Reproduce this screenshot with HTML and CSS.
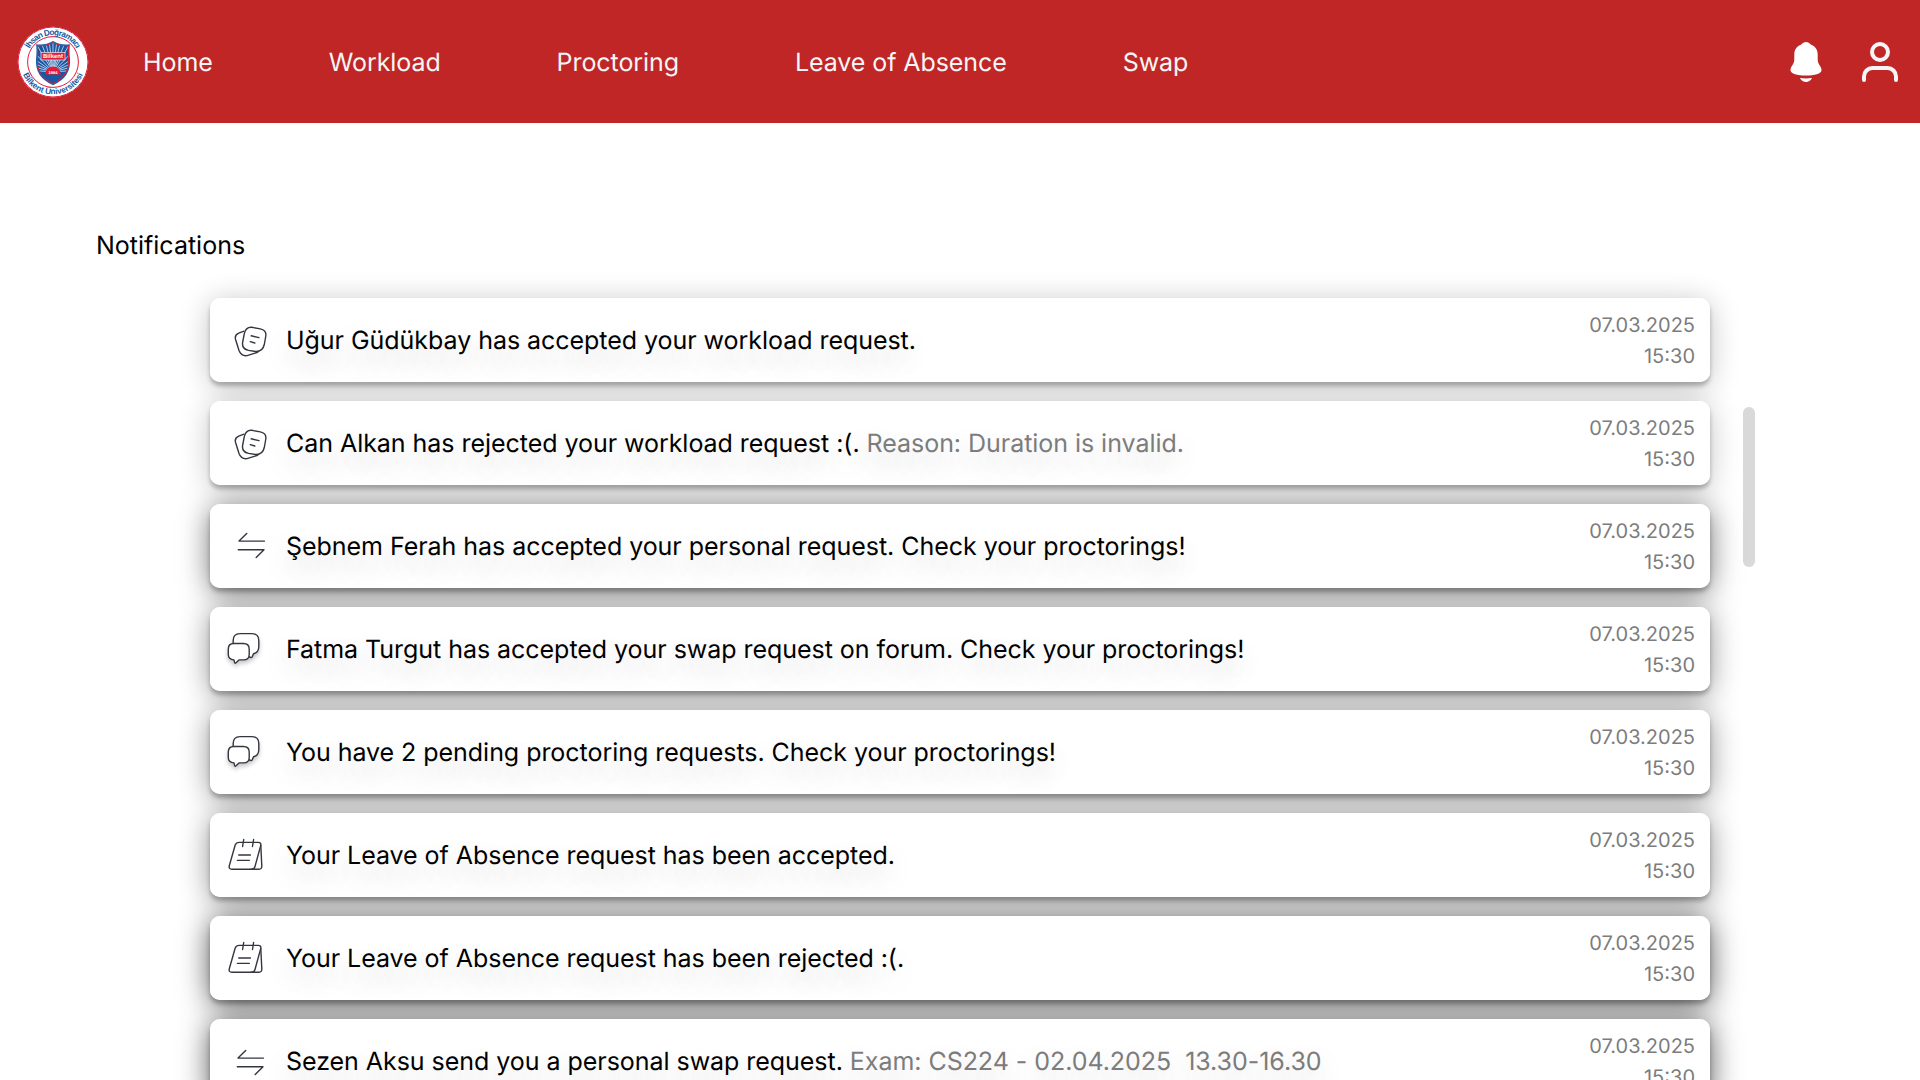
FILE: index.html
```html
<!DOCTYPE html>
<html lang="en">
<head>
<meta charset="utf-8">
<title>Notifications</title>
<link rel="stylesheet" href="styles.css">
</head>
<body>
<svg class="sprite" aria-hidden="true">
  <symbol id="notes" viewBox="0 0 76 84">
    <path d="M34 33.2 28.7 35.1Q24.4 37 25.5 41.2L29 52.5Q31.3 58.4 37 57.6L45 55.2Q47 54.6 48.2 53.6"/>
    <path d="M41.8 29.3 50.3 30.9Q56.6 32.2 55.8 38L54.3 46.5Q52.6 53.9 45.5 53.5L38.6 52.4Q31.7 50.9 32.6 44.5L34.3 35.6Q35.8 28.8 41.8 29.3Z"/>
    <path d="M41.2 37.8 49 39.6M40.2 43.7 44.8 45"/>
  </symbol>
  <symbol id="swap" viewBox="0 0 76 84">
    <path fill="none" d="M54.5 37.1H29L36.7 29.4M28.3 45.8H54L46.2 53.6"/>
  </symbol>
  <symbol id="chat" viewBox="0 0 76 84">
    <path d="M23.2 36.5V33.5Q23.2 26.6 30 26.6H42Q48.8 26.6 48.8 33.5V39.5Q48.8 45.6 43.5 46.8L42.3 49.6Q41.4 51.4 39 49.6"/>
    <path d="M23.8 36.5H33.5Q39.2 36.5 39.2 42V47.5Q39.2 52.9 33.5 52.9H29L26 55.8Q24.8 56.8 24.5 55.2L24 52.9Q18.3 52.5 18.3 47.5V42Q18.3 36.5 23.8 36.5Z"/>
  </symbol>
  <symbol id="pad" viewBox="0 0 76 84">
    <path d="M29.2 29.4H48.2Q51.5 29.4 50.7 32.6L45 53.5Q44.2 56.2 41.5 56.2H22Q18.5 56.2 19.3 52.8L25.2 32Q26.2 29.4 29.2 29.4Z"/>
    <path fill="none" d="M50.8 32.5 51.8 53Q51.9 56.2 49 56.2H41M33.7 26.5 32.6 33.5M43.6 26.5 42.5 33.5M28.7 42H40.4M27.4 47.4H39.3"/>
  </symbol>
</svg>

<header class="topbar">
  <svg class="logo" viewBox="0 0 72 72" role="img" aria-label="Bilkent">
    <defs>
      <path id="arc-top" d="M9 36A27 27 0 0 1 63 36"/>
      <path id="arc-bottom" d="M3.6 36A32.4 32.4 0 0 0 68.4 36"/>
      <clipPath id="shield"><path d="M36 16.5Q43 20.5 51.5 19.5Q51 24 51.8 33Q53 50 36 58Q19 50 20.2 33Q21 24 20.5 19.5Q29 20.5 36 16.5Z"/></clipPath>
    </defs>
    <circle class="white" cx="36" cy="36" r="35.3"/>
    <circle class="ring" cx="36" cy="36" r="35"/>
    <circle class="ring" cx="36" cy="36" r="25.4"/>
    <path class="edge" d="M36 15Q43.5 19.5 53 18.3Q52 24 53 33Q54.5 51 36 59.2Q17.5 51 19 33Q20 24 19 18.3Q28.5 19.5 36 15Z"/>
    <g clip-path="url(#shield)">
      <rect class="blue" x="17" y="14" width="38" height="46"/>
      <path class="rays" d="M36 46 10 44M36 46 10 39M36 46 10 34M36 46 10 28M36 46 13 22M36 46 18 16M36 46 23 14M36 46 28 14M36 46 32 14M36 46V14M36 46 40 14M36 46 44 14M36 46 49 14M36 46 54 16M36 46 59 22M36 46 62 28M36 46 62 34M36 46 62 39M36 46 62 44"/>
      <rect class="blue" x="18" y="48.5" width="36" height="12"/>
      <path class="red" d="M28 48.5A8 8 0 0 1 44 48.5Z"/>
    </g>
    <path class="ring" d="M36 16.8Q43 20.7 51.5 19.8Q51 24 51.6 33Q53 50 36 57.6Q19 50 20.4 33Q21 24 20.5 19.8Q29 20.7 36 16.8Z"/>
    <rect class="plate" x="24" y="26.5" width="24" height="7.5"/>
    <text class="plate-text" x="36" y="32.4">Bilkent</text>
    <text class="year" x="36" y="47.5">1984</text>
    <text class="seal"><textPath href="#arc-top" startOffset="50%" textLength="57">İhsan Doğramacı</textPath></text>
    <text class="seal"><textPath href="#arc-bottom" startOffset="50%" textLength="76">Bilkent Üniversitesi</textPath></text>
  </svg>
  <nav class="nav">
    <a>Home</a><a>Workload</a><a>Proctoring</a><a>Leave of Absence</a><a>Swap</a>
  </nav>
  <div class="actions">
    <svg class="bell" viewBox="0 0 32 42"><path d="M16 1C18.2 1 19.3 2.2 20.8 3.5C25 5 27.7 8.5 27.7 13.5V18.5C27.7 23.5 31.5 25 31.5 29C31.5 33 24.5 34.5 16 34.5S.5 33 .5 29C.5 25 4.3 23.5 4.3 18.5V13.5C4.3 8.5 7 5 11.2 3.5C12.7 2.2 13.8 1 16 1ZM9.8 37Q16 37.8 22.2 37C20.5 39.8 18.6 41 16 41S11.5 39.8 9.8 37Z"/></svg>
    <svg class="user" viewBox="0 0 40 42"><circle cx="20" cy="11" r="8"/><path d="M4 39V35.5A8.5 8.5 0 0 1 12.5 27H27.5A8.5 8.5 0 0 1 36 35.5V39"/></svg>
  </div>
</header>

<main class="page">
  <h1 class="title">Notifications</h1>
  <div class="feed">
    <ul class="list">
      <li class="card soft"><svg class="icon"><use href="#notes"/></svg><p class="message">Uğur Güdükbay has accepted your workload request.</p><time class="stamp">07.03.2025<br>15:30</time></li>
      <li class="card soft"><svg class="icon"><use href="#notes"/></svg><p class="message">Can Alkan has rejected your workload request :(. <span class="detail">Reason: Duration is invalid.</span></p><time class="stamp">07.03.2025<br>15:30</time></li>
      <li class="card strong"><svg class="icon"><use href="#swap"/></svg><p class="message">Şebnem Ferah has accepted your personal request. Check your proctorings!</p><time class="stamp">07.03.2025<br>15:30</time></li>
      <li class="card medium"><svg class="icon raised"><use href="#chat"/></svg><p class="message">Fatma Turgut has accepted your swap request on forum. Check your proctorings!</p><time class="stamp">07.03.2025<br>15:30</time></li>
      <li class="card medium"><svg class="icon raised"><use href="#chat"/></svg><p class="message">You have 2 pending proctoring requests. Check your proctorings!</p><time class="stamp">07.03.2025<br>15:30</time></li>
      <li class="card medium"><svg class="icon"><use href="#pad"/></svg><p class="message">Your Leave of Absence request has been accepted.</p><time class="stamp">07.03.2025<br>15:30</time></li>
      <li class="card heavy"><svg class="icon"><use href="#pad"/></svg><p class="message">Your Leave of Absence request has been rejected :(.</p><time class="stamp">07.03.2025<br>15:30</time></li>
      <li class="card heavy"><svg class="icon" viewBox="1 -2 76 84"><use href="#swap" width="76" height="84"/></svg><p class="message">Sezen Aksu send you a personal swap request. <span class="detail">Exam: CS224 - 02.04.2025&nbsp; 13.30-16.30</span></p><time class="stamp">07.03.2025<br>15:30</time></li>
    </ul>
    <div class="scrollbar"></div>
  </div>
</main>
</body>
</html>
```
FILE: styles.css
```css
* { box-sizing: border-box; }

body {
  margin: 0;
  height: 1080px;
  overflow: hidden;
  display: flex;
  flex-direction: column;
  background: #fff;
  color: #000;
  font-family: Inter, "Liberation Sans", sans-serif;
  font-size: 25px;
  font-weight: 400;
  text-rendering: geometricPrecision;
}

.sprite { display: none; }

.topbar {
  flex: none;
  display: flex;
  align-items: center;
  height: 123px;
  padding: 0 20px 0 17px;
  background: #c02626;
  color: #f5f5f5;
}

.logo { width: 72px; height: 72px; flex: none; }
.logo .white { fill: #fff; }
.logo .ring { fill: none; stroke: #e31b3a; stroke-width: 1; }
.logo .edge { fill: #1f5fa6; }
.logo .blue { fill: #1558a4; }
.logo .red { fill: #e31b3a; }
.logo .rays { stroke: #dbe6f2; stroke-width: .8; }
.logo .plate { fill: #e31b3a; stroke: #fff; stroke-width: .6; }
.logo text { font-family: "Liberation Sans", sans-serif; font-weight: 700; text-anchor: middle; }
.logo .plate-text { fill: #fff; font-size: 6px; }
.logo .year { fill: #fff; font-size: 4px; }
.logo .seal { fill: #1558a4; font-size: 8.2px; }

.nav { display: flex; gap: 116px; margin-left: 54px; padding-top: 2px; line-height: 30px; letter-spacing: -.08px; }

.actions { display: flex; align-items: center; gap: 38px; margin-left: auto; }
.bell { width: 32px; height: 42px; fill: #fff; }
.user { width: 40px; height: 42px; fill: none; stroke: #f5f5f5; stroke-width: 4; stroke-linecap: round; }

.page { padding: 108px 164px 0 96px; }

.title { margin: 0; font-size: 25px; font-weight: 400; line-height: 30px; }

.feed { display: flex; gap: 33px; margin: 37px 0 0 114px; }

.list {
  flex: none;
  display: flex;
  flex-direction: column;
  gap: 19px;
  width: 1500px;
  margin: 0;
  padding: 0;
  list-style: none;
  isolation: isolate;
}

.card {
  position: relative;
  display: flex;
  align-items: center;
  height: 84px;
  padding-right: 15px;
  border-radius: 10px;
  background: #fff;
}

/* Shadows sit on a layer below every card, so none falls on a neighbour. */
.card::before {
  content: "";
  position: absolute;
  inset: 0;
  z-index: -1;
  border-radius: 10px;
  box-shadow: 0 4px 4px rgba(0, 0, 0, .25), 0 4px 30px rgba(0, 0, 0, var(--depth));
}

.soft { --depth: .24; }
.medium { --depth: .44; }
.strong { --depth: .55; }
.heavy { --depth: .67; }

.icon {
  flex: none;
  width: 76px;
  height: 84px;
  fill: #fff;
  stroke: #343740;
  stroke-width: 1.4;
  stroke-linecap: round;
  stroke-linejoin: round;
}
.raised { filter: drop-shadow(0 3px 2px rgba(0, 0, 0, .22)); }

.message {
  flex: 1;
  margin: 0;
  padding-top: 2px;
  line-height: 30px;
  letter-spacing: -.04px;
  white-space: nowrap;
  text-shadow: 0 12px 28px rgba(0, 0, 0, .22);
}

.detail { color: #7c7c7c; }

.stamp { padding-top: 2px; color: #7c7c7c; font-size: 20px; line-height: 31px; text-align: right; }

.scrollbar { width: 12px; height: 160px; margin-top: 109px; border-radius: 6px; background: #d9d9d9; }
```
